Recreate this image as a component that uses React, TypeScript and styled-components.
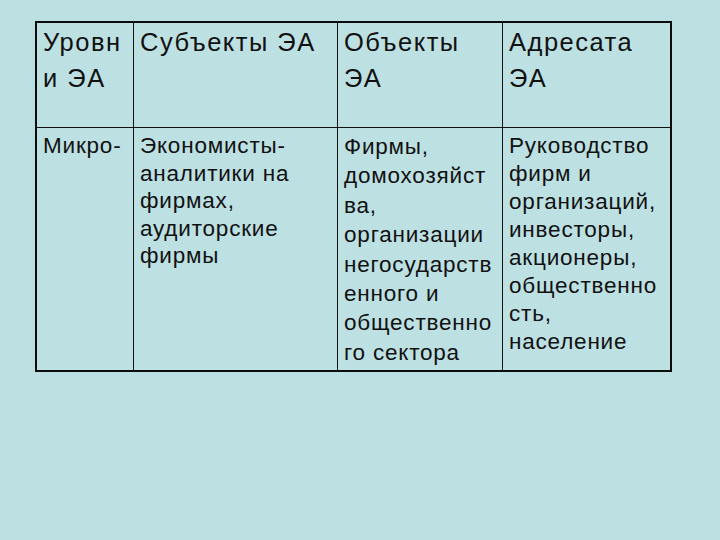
import React from 'react';
import styled, { createGlobalStyle } from 'styled-components';

const GlobalStyle = createGlobalStyle`
  html, body {
    margin: 0;
    padding: 0;
    background: #bcdfe2;
  }
  body {
    width: 720px;
    height: 540px;
    overflow: hidden;
    font-family: "Liberation Sans", Arial, sans-serif;
    color: #111;
  }
`;

const Table = styled.div`
  display: grid;
  grid-template-columns: 97px 204px 165px 167px;
  grid-template-rows: 105px 242px;
  width: 633px;
  margin: 21px 0 0 35px;
  border: 2px solid #0c0c0c;
  background: #bde0e3;
`;

const HeadCell = styled.div<{ $last?: boolean }>`
  box-sizing: border-box;
  border-right: ${(p) => (p.$last ? 'none' : '1px solid #111')};
  border-bottom: 1px solid #111;
  padding: 1px 0 0 6px;
  font-size: 25.5px;
  line-height: 36px;
  letter-spacing: 1.5px;
  white-space: nowrap;
`;

const BodyCell = styled.div<{ $last?: boolean; $lh: number }>`
  box-sizing: border-box;
  border-right: ${(p) => (p.$last ? 'none' : '1px solid #111')};
  padding: 4px 0 0 6px;
  font-size: 22.5px;
  line-height: ${(p) => p.$lh}px;
  letter-spacing: 0.8px;
  white-space: nowrap;
`;

const Line = styled.div``;

const header = [
  ['Уровн', 'и ЭА'],
  ['Субъекты ЭА'],
  ['Объекты', 'ЭА'],
  ['Адресата', 'ЭА'],
];

const body = [
  { lh: 28, lines: ['Микро-'] },
  {
    lh: 27.5,
    lines: ['Экономисты-', 'аналитики на', 'фирмах,', 'аудиторские', 'фирмы'],
  },
  {
    lh: 29.4,
    lines: [
      'Фирмы,',
      'домохозяйст',
      'ва,',
      'организации',
      'негосударств',
      'енного и',
      'общественно',
      'го сектора',
    ],
  },
  {
    lh: 28,
    lines: [
      'Руководство',
      'фирм и',
      'организаций,',
      'инвесторы,',
      'акционеры,',
      'общественно',
      'сть,',
      'население',
    ],
  },
];

export default function App() {
  return (
    <>
      <GlobalStyle />
      <Table>
        {header.map((lines, i) => (
          <HeadCell key={'h' + i} $last={i === 3}>
            {lines.map((l) => (
              <Line key={l}>{l}</Line>
            ))}
          </HeadCell>
        ))}
        {body.map((col, i) => (
          <BodyCell key={'b' + i} $last={i === 3} $lh={col.lh}>
            {col.lines.map((l) => (
              <Line key={l}>{l}</Line>
            ))}
          </BodyCell>
        ))}
      </Table>
    </>
  );
}
